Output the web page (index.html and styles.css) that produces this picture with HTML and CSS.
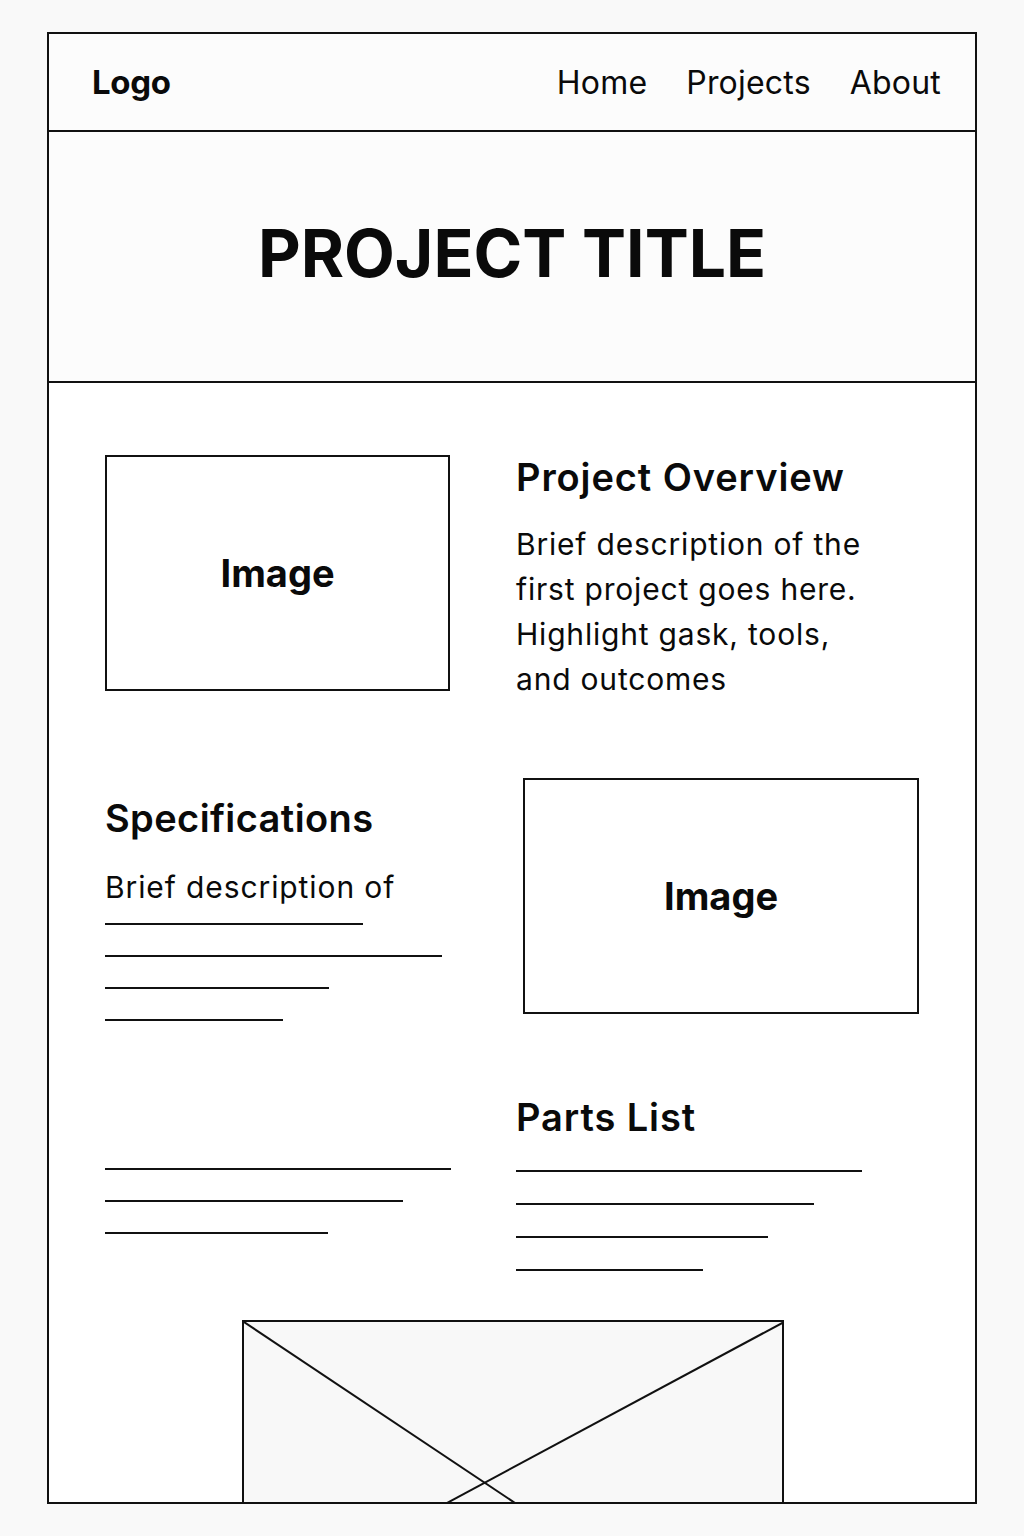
FILE: index.html
```html
<!DOCTYPE html>
<html lang="en">
<head>
    <meta charset="UTF-8">
    <meta name="viewport" content="width=device-width, initial-scale=1.0">
    <title>Project Page</title>
    <link rel="stylesheet" href="styles.css">
</head>
<body>

    <div class="frame">
        <header class="topbar">
            <div class="logo">Logo</div>
            <nav class="nav">
                <a href="#">Home</a>
                <a href="#">Projects</a>
                <a href="#">About</a>
            </nav>
        </header>

        <section class="hero">
            <h1>PROJECT TITLE</h1>
        </section>

        <main class="content">
            <div class="row row-overview">
                <div class="img-box">Image</div>
                <div class="text-block">
                    <h2 class="wide">Project Overview</h2>
                    <p>Brief description of the<br>first project goes here.<br>Highlight gask, tools,<br>and outcomes</p>
                </div>
            </div>

            <div class="row row-specs">
                <div class="text-block">
                    <h2>Specifications</h2>
                    <p class="short">Brief description of</p>
                    <div class="lines">
                        <span style="width: 258px"></span>
                        <span style="width: 337px"></span>
                        <span style="width: 224px"></span>
                        <span style="width: 178px"></span>
                    </div>
                </div>
                <div class="img-box img-wide">Image</div>
            </div>

            <div class="row row-parts">
                <div class="lines lines-left">
                    <span style="width: 346px"></span>
                    <span style="width: 298px"></span>
                    <span style="width: 223px"></span>
                </div>
                <div class="text-block">
                    <h2 class="wide">Parts List</h2>
                    <div class="lines">
                        <span style="width: 346px"></span>
                        <span style="width: 298px"></span>
                        <span style="width: 252px"></span>
                        <span style="width: 187px"></span>
                    </div>
                </div>
            </div>

            <div class="placeholder">
                <svg width="540" height="181" viewBox="0 0 540 181">
                    <line x1="0" y1="0" x2="271" y2="181" stroke="#111" stroke-width="2"/>
                    <line x1="540" y1="0" x2="203" y2="181" stroke="#111" stroke-width="2"/>
                </svg>
            </div>
        </main>
    </div>

</body>
</html>
```

FILE: styles.css
```css
body {
    margin: 0;
    background-color: #f9f9f9;
    font-family: Inter, "Noto Sans", Arial, sans-serif;
    color: #0a0a0a;
}
.frame {
    box-sizing: border-box;
    width: 930px;
    height: 1472px;
    margin: 32px 0 0 47px;
    border: 2px solid #111;
    background: #fcfcfc;
    display: flex;
    flex-direction: column;
    overflow: hidden;
}
.topbar {
    flex-shrink: 0;
    display: flex;
    align-items: center;
    justify-content: space-between;
    height: 96px;
    padding: 0 34px 0 43px;
    border-bottom: 2px solid #111;
}
.logo {
    font-size: 33px;
    font-weight: 700;
    letter-spacing: -0.3px;
}
.nav {
    display: flex;
    gap: 39px;
}
.nav a {
    text-decoration: none;
    color: #0a0a0a;
    font-size: 32px;
    letter-spacing: 0.2px;
}
.hero {
    flex-shrink: 0;
    height: 249px;
    border-bottom: 2px solid #111;
    display: flex;
    align-items: center;
    justify-content: center;
}
.hero h1 {
    margin: 0 0 8px;
    font-size: 66px;
    font-weight: 700;
    letter-spacing: 0;
}
.content {
    flex: 1;
    min-height: 0;
    background: #fff;
    padding: 0 0 0 56px;
}
.row {
    display: grid;
    grid-template-columns: 345px 402px;
    column-gap: 66px;
    align-items: start;
}
.row-overview {
    margin-top: 72px;
}
.row-specs {
    margin-top: 76px;
}
.row-parts {
    margin-top: 74px;
}
.img-box {
    box-sizing: border-box;
    height: 236px;
    border: 2px solid #111;
    background: #fff;
    display: flex;
    align-items: center;
    justify-content: center;
    font-size: 38px;
    font-weight: 700;
}
.img-wide {
    width: 396px;
    margin-left: 7px;
}
h2 {
    margin: 0;
    font-size: 38px;
    font-weight: 600;
    line-height: 44px;
    letter-spacing: 0.4px;
}
h2.wide {
    letter-spacing: 0.9px;
}
.text-block p {
    margin: 23px 0 0;
    font-size: 30px;
    line-height: 45px;
    letter-spacing: 0.8px;
}
.row-specs .text-block {
    padding-top: 18px;
}
.text-block p.short {
    margin-top: 25px;
    letter-spacing: 0.9px;
}
.lines {
    display: flex;
    flex-direction: column;
    gap: 30px;
}
.lines span {
    display: block;
    height: 2px;
    background: #111;
}
.row-specs .lines {
    margin-top: 13px;
}
.lines-left {
    margin-top: 73px;
}
.row-parts .text-block .lines {
    margin-top: 31px;
    gap: 31px;
}
.placeholder {
    flex-shrink: 0;
    box-sizing: border-box;
    width: 542px;
    height: 360px;
    margin: 49px 0 0 137px;
    border: 2px solid #111;
    background: #f8f8f8;
}
.placeholder svg {
    display: block;
}
```
